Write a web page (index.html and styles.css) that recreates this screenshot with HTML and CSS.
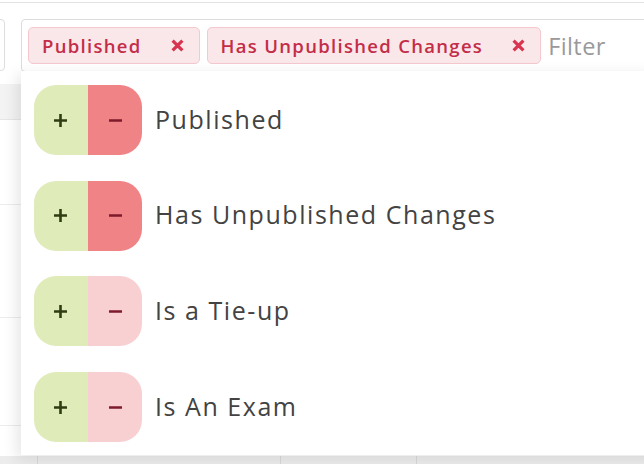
FILE: index.html
```html
<!DOCTYPE html>
<html>
<head>
<meta charset="utf-8">
<link rel="stylesheet" href="styles.css">
</head>
<body>
<div class="page">
  <div class="topline"></div>
  <div class="toolbar">
    <div class="side-box"></div>
    <div class="filter">
      <div class="filter-input">
        <span class="tag">Published<svg class="tag-x" viewBox="0 0 12 12"><path d="M1.5 1.5L10.5 10.5M10.5 1.5L1.5 10.5"/></svg></span>
        <span class="tag">Has Unpublished Changes<svg class="tag-x" viewBox="0 0 12 12"><path d="M1.5 1.5L10.5 10.5M10.5 1.5L1.5 10.5"/></svg></span>
        <span class="placeholder">Filter</span>
      </div>
      <div class="menu">
        <div class="item">
          <div class="pill"><span class="plus"><svg viewBox="0 0 13 13"><path d="M0 6.5H13M6.5 0V13"/></svg></span><span class="minus active"><svg viewBox="0 0 13 13"><path d="M0 6.5H13"/></svg></span></div>
          <span class="label">Published</span>
        </div>
        <div class="item">
          <div class="pill"><span class="plus"><svg viewBox="0 0 13 13"><path d="M0 6.5H13M6.5 0V13"/></svg></span><span class="minus active"><svg viewBox="0 0 13 13"><path d="M0 6.5H13"/></svg></span></div>
          <span class="label">Has Unpublished Changes</span>
        </div>
        <div class="item">
          <div class="pill"><span class="plus"><svg viewBox="0 0 13 13"><path d="M0 6.5H13M6.5 0V13"/></svg></span><span class="minus"><svg viewBox="0 0 13 13"><path d="M0 6.5H13"/></svg></span></div>
          <span class="label">Is a Tie-up</span>
        </div>
        <div class="item">
          <div class="pill"><span class="plus"><svg viewBox="0 0 13 13"><path d="M0 6.5H13M6.5 0V13"/></svg></span><span class="minus"><svg viewBox="0 0 13 13"><path d="M0 6.5H13"/></svg></span></div>
          <span class="label">Is An Exam</span>
        </div>
      </div>
    </div>
  </div>
  <div class="table">
    <div class="thead"></div>
    <div class="row r1"></div>
    <div class="row r2"></div>
    <div class="row r3"></div>
    <div class="tfoot">
      <span class="col c1"></span><span class="col c2"></span><span class="col c3"></span>
    </div>
  </div>
</div>
</body>
</html>
```

FILE: styles.css
```css
* { box-sizing: border-box; }
html, body { margin: 0; padding: 0; }
body {
  width: 644px;
  height: 464px;
  overflow: hidden;
  background: #fff;
  font-family: "Open Sans", "DejaVu Sans", sans-serif;
}
.page { position: relative; width: 644px; height: 464px; }
.topline { height: 3px; border-bottom: 1px solid #e3e3e3; }
.toolbar {
  display: flex;
  align-items: flex-start;
  margin-top: 16px;
  height: 52px;
}
.side-box {
  width: 20px;
  height: 52px;
  margin-left: -15px;
  border: 1px solid #dedede;
  border-radius: 4px;
  flex: none;
}
.filter {
  position: relative;
  margin-left: 16px;
  flex: 1;
  z-index: 2;
}
.filter-input {
  display: flex;
  align-items: center;
  gap: 7px;
  height: 53px;
  width: 640px;
  padding: 0 6px;
  border: 1px solid #dcdcdc;
  border-radius: 4px;
  background: #fff;
  white-space: nowrap;
}
.tag {
  display: inline-flex;
  align-items: center;
  height: 37px;
  padding: 0 15px 0 13px;
  background: #fae7e9;
  border: 1px solid #f4c8cd;
  border-radius: 5px;
  color: #c32d48;
  font-size: 18.5px;
  font-weight: 600;
  letter-spacing: 1.3px;
}
.tag-x {
  width: 13px;
  height: 13px;
  margin-left: 29px;
  fill: none;
  stroke: #d8344f;
  stroke-width: 3;
  stroke-linecap: butt;
}
.placeholder {
  color: #999;
  font-size: 23.5px;
  letter-spacing: 0.4px;
}
.menu {
  position: absolute;
  left: 0;
  top: 52px;
  width: 640px;
  height: 384px;
  background: #fff;
  box-shadow: -4px 4px 14px rgba(0,0,0,0.10);
  padding: 14px 0 0 13px;
  display: flex;
  flex-direction: column;
  gap: 25.7px;
}
.item {
  display: flex;
  align-items: center;
  gap: 13px;
}
.pill {
  display: flex;
  width: 108px;
  height: 70px;
  border-radius: 22px;
  overflow: hidden;
  flex: none;
}
.plus, .minus {
  flex: 0 0 54px;
  display: flex;
  align-items: center;
  justify-content: center;
}
.plus svg, .minus svg {
  width: 13px;
  height: 13px;
  fill: none;
  stroke-width: 2.6;
}
.plus { background: #dfebb8; }
.plus svg { stroke: #2f3d12; margin-right: 1px; }
.minus { background: #f8d0d2; }
.minus svg { stroke: #7d1a2c; }
.minus.active { background: #f08385; }
.label {
  font-size: 25px;
  color: #434343;
  letter-spacing: 1.55px;
  margin-top: -3px;
}
.table {
  position: absolute;
  left: 0; top: 0;
  width: 644px; height: 464px;
  z-index: 0;
}
.thead {
  position: absolute; left: 0; right: 0; top: 84px; height: 36px;
  background: #f3f3f3;
  border-bottom: 1px solid #e6e6e6;
}
.row { position: absolute; left: 0; right: 0; height: 1px; background: #ececec; }
.r1 { top: 204px; }
.r2 { top: 317px; }
.r3 { top: 425px; }
.tfoot {
  position: absolute; left: 0; right: 0; top: 456px; height: 8px;
  background: #ececec;
}
.col { position: absolute; top: 0; bottom: 0; width: 1px; background: #d9d9d9; }
.c1 { left: 37px; }
.c2 { left: 280px; }
.c3 { left: 416px; }
```
